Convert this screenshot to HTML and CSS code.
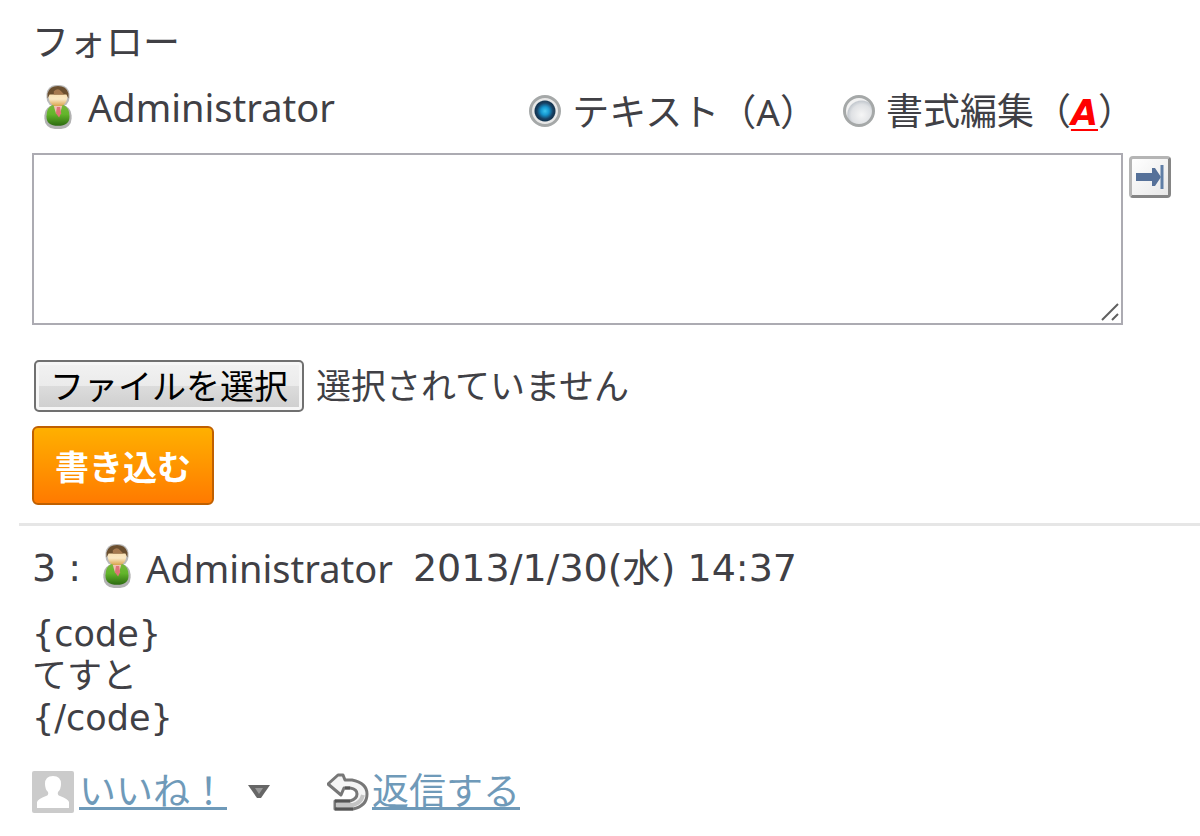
FILE: index.html
```
<!DOCTYPE html>
<html lang="ja">
<head>
    <meta charset="UTF-8">
    <meta name="viewport" content="width=device-width, initial-scale=1.0">
    <title>フォロー</title>
    <link rel="stylesheet" href="styles.css">
</head>
<body>
    <!-- shared icon -->
    <svg class="defs" aria-hidden="true">
        <defs>
            <linearGradient id="bodyGreen" x1="0" y1="0" x2="0" y2="1">
                <stop offset="0" stop-color="#78b83c"/>
                <stop offset="0.45" stop-color="#62b52a"/>
                <stop offset="1" stop-color="#2c6a10"/>
            </linearGradient>
            <linearGradient id="face" x1="0" y1="0" x2="0" y2="1">
                <stop offset="0" stop-color="#f9dfae"/>
                <stop offset="0.5" stop-color="#fae8c4"/>
                <stop offset="1" stop-color="#d9a34c"/>
            </linearGradient>
            <symbol id="user" viewBox="0 0 26 42">
                <rect x="0" y="19" width="26" height="23" rx="10" fill="#555" opacity="0.45"/>
                <rect x="2" y="0" width="22" height="21" rx="9" fill="#555" opacity="0.4"/>
                <path d="M2 30q0-9 6-11h10q6 2 6 11 0 9-11 9T2 30z" fill="url(#bodyGreen)"/>
                <path d="M4 7h18v5q-1 7-6 8h-6q-5-1-6-8z" fill="url(#face)"/>
                <path d="M3 13V8q2-7 10-7t10 7v5l-2-4H5z" fill="#6b4f2f"/>
                <path d="M9 6q4-4 7 0l3 3H9z" fill="#a5794f"/>
                <path d="M9 20h8l-2 7h-4z" fill="#f0c0b0"/>
                <path d="M12 21h3l1 6-2 4-3-4z" fill="#df7478"/>
            </symbol>
        </defs>
    </svg>

    <form class="follow" onsubmit="return false">
        <label class="follow-title" for="message">フォロー</label>

        <div class="follow-head">
            <div class="user">
                <svg class="user-icon" aria-hidden="true"><use href="#user"/></svg>
                <span class="user-name">Administrator</span>
            </div>
            <div class="formats">
                <label class="format"><input type="radio" name="format" checked><span>テキスト（<span class="latin">A</span>）</span></label>
                <label class="format"><input type="radio" name="format"><span>書式編集（<span class="rich">A</span>）</span></label>
            </div>
        </div>

        <div class="editor">
            <div class="message-box">
                <textarea class="message" id="message"></textarea>
                <svg class="grip" viewBox="0 0 18 18" aria-hidden="true">
                    <path d="M1 17L17 1M11 17l6-6" stroke="#606060" stroke-width="2" fill="none"/>
                </svg>
            </div>
            <button class="expand" type="button" aria-label="広げる">
                <svg viewBox="0 0 30 26" aria-hidden="true">
                    <path d="M1 9h16V4h3l6 9-6 9h-3v-5H1z" fill="#567199"/>
                    <path d="M27 1v24" stroke="#5f7ea6" stroke-width="3"/>
                </svg>
            </button>
        </div>

        <div class="file">
            <input class="file-input" type="file" id="file">
            <label class="file-button" for="file">ファイルを選択</label>
            <span class="file-name">選択されていません</span>
        </div>

        <button class="submit" type="submit">書き込む</button>
    </form>

    <article class="post">
        <header class="post-head">
            <span class="post-number">3 :</span>
            <svg class="user-icon" aria-hidden="true"><use href="#user"/></svg>
            <span class="user-name">Administrator</span>
            <time class="post-date" datetime="2013-01-30T14:37">2013/1/30(水) 14:37</time>
        </header>
        <p class="post-body">{code}<br>てすと<br>{/code}</p>
        <footer class="post-actions">
            <svg class="like-icon" viewBox="0 0 42 42" aria-hidden="true">
                <rect width="42" height="42" rx="2" fill="#cbcbcb"/>
                <path d="M5 37v-6q1-3 9-6 3-1 2-4-3-3-3-8 0-8 8-8t8 8q0 5-3 8-1 3 2 4 8 3 9 6v6z" fill="#fff"/>
            </svg>
            <a class="like" href="#">いいね！</a>
            <button class="menu" type="button" aria-label="メニュー">
                <svg viewBox="0 0 22 14" aria-hidden="true">
                    <path d="M0 0h22l-9 13H9z" fill="#666"/>
                    <path d="M7 3h8l-4 6z" fill="#999"/>
                </svg>
            </button>
            <svg class="reply-icon" viewBox="0 0 42 40" aria-hidden="true">
                <path d="M1 12L11 3h5l2 5h7q15 3 15 14 0 12-14 15H8v-8h15q7-2 7-7t-7-6h-6l-3 7z" fill="#f4f4f4" stroke="#777" stroke-width="3" stroke-linejoin="round"/>
                <path d="M9 33h17q8-2 10-10" stroke="#c4c4c4" stroke-width="4" fill="none"/>
                <path d="M8 37h18M8 29h15M18 16h5" stroke="#555" stroke-width="3"/>
            </svg>
            <a class="reply" href="#">返信する</a>
        </footer>
    </article>
</body>
</html>
```
FILE: styles.css
```
* {
    margin: 0;
    padding: 0;
    box-sizing: border-box;
}

body {
    font-family: "Noto Sans CJK JP", sans-serif;
    font-size: 37px;
    line-height: 42px;
    color: #404045;
    background: #fff;
}

.defs {
    position: absolute;
    width: 0;
    height: 0;
}

.follow {
    padding: 18px 29px 18px 32px;
}

.follow-title {
    display: block;
    line-height: 44px;
}

.follow-head {
    display: flex;
    align-items: center;
    justify-content: space-between;
    height: 52px;
    margin: 23px 36px 16px 12px;
}

.user {
    display: flex;
    align-items: center;
    gap: 16px;
    padding-bottom: 8px;
}

.user-icon {
    flex: none;
    width: 28px;
    height: 44px;
}

.user-name {
    font-family: "Noto Sans", sans-serif;
    font-size: 38px;
}

.formats {
    display: flex;
    gap: 26px;
}

.format {
    display: flex;
    align-items: center;
    gap: 11px;
    white-space: nowrap;
}

.format input {
    appearance: none;
    width: 32px;
    height: 32px;
    border: 3px solid #a5a8a8;
    border-radius: 50%;
    background: radial-gradient(circle at 60% 65%, #f6f6f6 0, #dfe1e4 45%, #c5cad0 60%, #f2f2f2 65%);
}

.format input:checked {
    background: radial-gradient(circle, #3cc5ee 0, #1596cf 22%, #173f62 44%, #123450 54%, #e8e8e8 60%);
}

.latin {
    font-family: "Noto Sans", sans-serif;
}

.rich {
    font-family: "DejaVu Sans", sans-serif;
    font-size: 35px;
    font-weight: 700;
    font-style: italic;
    color: #f00;
    text-decoration: underline;
    text-decoration-thickness: 2px;
    text-underline-offset: 4px;
}

.editor {
    display: flex;
    align-items: flex-start;
    gap: 6px;
}

.message-box {
    position: relative;
    flex: 1;
}

.message {
    display: block;
    width: 100%;
    height: 172px;
    padding: 4px;
    border: 2px solid #acabb2;
    font: inherit;
    color: inherit;
    resize: none;
}

.grip {
    position: absolute;
    right: 4px;
    bottom: 4px;
    width: 18px;
    height: 18px;
}

.expand {
    display: flex;
    align-items: center;
    justify-content: center;
    width: 42px;
    height: 42px;
    margin-top: 3px;
    border: 3px solid;
    border-color: #b5b5b5 #858585 #858585 #b5b5b5;
    border-radius: 4px;
    background: linear-gradient(135deg, #fff, #e8e8e8);
}

.expand svg {
    width: 30px;
    height: 26px;
}

.file {
    display: flex;
    align-items: center;
    gap: 12px;
    margin: 35px 0 14px 2px;
}

.file-input {
    position: absolute;
    width: 1px;
    height: 1px;
    opacity: 0;
}

.file-button {
    height: 52px;
    padding: 0 14px;
    border: 2px solid #707070;
    border-radius: 5px;
    box-shadow: inset 0 0 0 3px #f6f6f6;
    background: linear-gradient(#f2f2f2 0, #ebebeb 50%, #dcdcdc 50%, #cecece 100%);
    color: #000;
    font-size: 34px;
    line-height: 46px;
}

.file-name {
    padding-bottom: 4px;
    font-size: 35px;
}

.submit {
    display: block;
    width: 182px;
    height: 79px;
    border: 2px solid #c06000;
    border-radius: 6px;
    background: linear-gradient(#ffb000, #ff7a00);
    color: #fff;
    font-family: inherit;
    font-size: 34px;
    font-weight: 700;
}

.post {
    margin-left: 19px;
    padding: 18px 13px;
    border-top: 3px solid #e6e6e6;
}

.post-head {
    display: flex;
    align-items: center;
    height: 48px;
    white-space: nowrap;
}

.post-number,
.post-date {
    font-family: "DejaVu Sans", "Noto Sans CJK JP", sans-serif;
    font-size: 38px;
}

.post-head .user-icon {
    margin: 0 15px 4px 22px;
}

.post-date {
    margin-left: 20px;
}

.post-body {
    margin-top: 21px;
    font-family: "DejaVu Sans", "Noto Sans CJK JP", sans-serif;
    font-size: 35px;
}

.post-actions {
    display: flex;
    align-items: center;
    height: 48px;
    margin-top: 29px;
}

.post-actions svg {
    flex: none;
}

.like-icon {
    width: 42px;
    height: 42px;
    margin-right: 5px;
}

.post-actions a {
    padding-bottom: 6px;
    color: #6f9ab9;
    text-decoration-thickness: 3px;
    text-underline-offset: 2px;
}

.menu {
    display: flex;
    margin: 0 57px 0 21px;
    border: 0;
    background: none;
}

.menu svg {
    width: 22px;
    height: 14px;
}

.reply-icon {
    width: 42px;
    height: 40px;
    margin-right: 3px;
}
```
